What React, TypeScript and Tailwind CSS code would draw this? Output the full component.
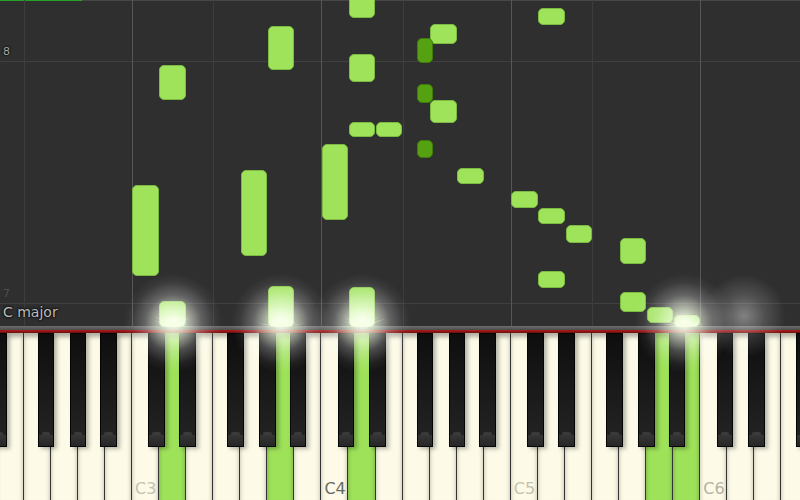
import React from 'react';

// keyboard geometry (one octave = 189.5px, C3 starts at x=132)
const W = 189.5 / 7;
const X0 = 132;
const xw = (i: number) => X0 + i * W;

// black key centre offset from the boundary to its right, by letter of the white key on its left
const BLACK_OFF: Record<number, number> = { 0: -2.7, 1: 1.7, 3: -4.7, 4: 0, 5: 3.6 };
const BK_W = 16.7;
const bx = (i: number) => xw(i + 1) + BLACK_OFF[((i % 7) + 7) % 7] - BK_W / 2;

const WHITE_FROM = -5; // E2
const WHITE_TO = 24; // F6
const LIT = [1, 5, 8, 19, 20];
const LABELS: Record<number, { text: string; cls: string }> = {
  0: { text: 'C3', cls: 'text-[#c4c2b0]' },
  7: { text: 'C4', cls: 'text-[#6a6a64]' },
  14: { text: 'C5', cls: 'text-[#c4c2b0]' },
  21: { text: 'C6', cls: 'text-[#b4b2a2]' },
};

type Note = { k: number; black?: boolean; top: number; bottom: number; active?: boolean };

const NOTES: Note[] = [
  { k: 8, top: -10, bottom: 18.3 },
  { k: 8, top: 54, bottom: 81.7 },
  { k: 8, top: 121.7, bottom: 137.3 },
  { k: 8, top: 287, bottom: 327, active: true },
  { k: 11, top: 24, bottom: 44 },
  { k: 11, top: 100, bottom: 122.7 },
  { k: 9, top: 121.7, bottom: 137.3 },
  { k: 7, top: 144, bottom: 220 },
  { k: 1, top: 65, bottom: 100 },
  { k: 1, top: 301, bottom: 327, active: true },
  { k: 5, top: 26, bottom: 70 },
  { k: 5, top: 286, bottom: 327, active: true },
  { k: 0, top: 185, bottom: 275.7 },
  { k: 4, top: 170, bottom: 256 },
  { k: 12, top: 168, bottom: 184 },
  { k: 14, top: 191, bottom: 207.7 },
  { k: 15, top: 8, bottom: 25 },
  { k: 15, top: 208.3, bottom: 224.3 },
  { k: 15, top: 270.7, bottom: 287.7 },
  { k: 16, top: 225, bottom: 242.7 },
  { k: 18, top: 238.3, bottom: 264.3 },
  { k: 18, top: 292.3, bottom: 311.7 },
  { k: 19, top: 306.7, bottom: 323.3 },
  { k: 20, top: 315, bottom: 327, active: true },
  { k: 3, black: true, top: 38.3, bottom: 63.3 },
  { k: 3, black: true, top: 84.3, bottom: 103.3 },
  { k: 3, black: true, top: 140, bottom: 158.3 },
];

// F#4 black key sits right of F4 (white index 10)
const noteBox = (n: Note) => {
  if (n.black) return { left: bx(10) + 0.5, width: 15.7 };
  return { left: xw(n.k) + 0.4, width: 26.4 };
};

const GLOWS = [
  { x: 172.5, y: 323, strong: true },
  { x: 281, y: 323, strong: true },
  { x: 362, y: 323, strong: true },
  { x: 684, y: 323, strong: true },
  { x: 744, y: 316, strong: false },
];

// spiky burst where a note meets the keys
const sparkPath = (seed: number) => {
  const pts: string[] = [];
  const n = 26;
  for (let j = 0; j <= n; j++) {
    const a = Math.PI + (Math.PI * j) / n;
    const r = j % 2 === 0 ? 8 + ((j * 7 + seed * 5) % 11) : 3.5;
    const sx = Math.cos(a) * r * 1.5;
    const sy = Math.sin(a) * r;
    pts.push(`${(26 + sx).toFixed(1)},${(20 + sy).toFixed(1)}`);
  }
  return `M0,20 L${pts.join(' L')} L52,20 Z`;
};

// columns between grid lines, starting at F2: F..B (4 keys), C..E (3 keys)
const COLS = [4, 3, 4, 3, 4, 3, 4, 3];

export default function App() {
  const whites: number[] = [];
  for (let i = WHITE_FROM; i <= WHITE_TO; i++) whites.push(i);
  const blacks: number[] = [];
  for (let i = WHITE_FROM - 1; i <= WHITE_TO; i++) {
    const n = ((i % 7) + 7) % 7;
    if (BLACK_OFF[n] !== undefined) blacks.push(i);
  }

  return (
    <div className="w-[800px] h-[500px] relative overflow-hidden bg-[#2f2f2f] flex flex-col font-['DejaVu_Sans',sans-serif]">
      {/* note roll */}
      <div className="h-[326px] relative shrink-0">
        {/* grid */}
        <div className="absolute inset-0 flex flex-col">
          <div className="h-px bg-[#474747] flex">
            <div className="w-[82px] bg-[#23a323]" />
          </div>
          <div className="h-[61px] border-b border-[#404040]" />
          <div className="h-[242px] border-b border-[#404040]" />
        </div>
        <div className="absolute inset-0 flex ml-[23.7px]">
          {COLS.map((c, idx) => (
            <div
              key={idx}
              className={`shrink-0 h-full border-l ${c === 4 ? 'border-[#3d3d3d] w-[108.286px]' : 'border-[#575757] w-[81.214px]'}`}
            />
          ))}
        </div>

        <span className="absolute left-[3px] top-[46px] text-[11px] leading-none text-[#a8a8a8] [text-shadow:0_0_2px_#000,0_0_2px_#000]">8</span>
        <span className="absolute left-[3px] top-[288px] text-[11px] leading-none text-[#4e4e4e]">7</span>

        {NOTES.map((n, idx) => {
          const b = noteBox(n);
          const cls = n.black
            ? 'bg-[#55a112] border-[#3f7d0b]'
            : n.active
              ? 'bg-gradient-to-b from-[#9fe35b] via-[#b4ec7e] to-[#eafcd8] border-[#86c64a]'
              : 'bg-[#9fe35b] border-[#7cbb42]';
          return (
            <div
              key={idx}
              className={`absolute border rounded-[5px] ${cls}`}
              style={{ left: b.left, width: b.width, top: n.top, height: n.bottom - n.top }}
            />
          );
        })}

        <span className="absolute left-[3px] top-[305px] text-[14px] leading-none text-[#bdbdbd] [text-shadow:0_0_3px_#000,0_0_2px_#000]">C major</span>
      </div>

      <div className="h-[4px] shrink-0 bg-gradient-to-b from-[#6e6e6e] to-[#4c4c4c]" />
      <div className="h-[3px] shrink-0 bg-gradient-to-b from-[#b01c1c] to-[#6e1010]" />

      {/* keyboard */}
      <div className="flex-1 relative">
        <div className="flex h-full ml-[-3.36px]">
          {whites.map(i => {
            const lit = LIT.includes(i);
            const label = LABELS[i];
            return (
              <div
                key={i}
                className={`w-[27.0714px] shrink-0 h-full border-r border-[#353535] flex flex-col justify-end pl-[3px] pb-[1px] shadow-[inset_0_4px_4px_rgba(0,0,0,0.3)] ${lit ? 'bg-[#9ee25a]' : 'bg-[#fdfbe7]'}`}
              >
                {label && <span className={`text-[16px] leading-[20px] ${label.cls}`}>{label.text}</span>}
              </div>
            );
          })}
        </div>

        {blacks.map(i => (
          <div
            key={`b${i}`}
            className="absolute top-0 h-[114px] border border-[#050505] bg-gradient-to-b from-[#0e0e0e] via-[#1a1a1a] to-[#242424] flex flex-col justify-end shadow-[3px_2px_4px_rgba(0,0,0,0.28)]"
            style={{ left: bx(i), width: BK_W }}
          >
            <div className="h-[3px] mx-[3px] bg-[#3a3a3a] rounded-t-[2px]" />
            <div className="h-[11px] bg-gradient-to-b from-[#363636] to-[#262626]" />
          </div>
        ))}
      </div>

      {/* glow over the hit line */}
      {GLOWS.map((g, idx) => (
        <div
          key={`g${idx}`}
          className={`absolute pointer-events-none rounded-full ${g.strong ? 'w-[100px] h-[100px] bg-[radial-gradient(circle,rgba(255,255,245,1)_0%,rgba(245,255,230,0.75)_16%,rgba(255,255,255,0.25)_40%,rgba(255,255,255,0.06)_58%,rgba(255,255,255,0)_70%)]' : 'w-[84px] h-[84px] bg-[radial-gradient(circle,rgba(255,255,255,0.4)_0%,rgba(255,255,255,0.16)_35%,rgba(255,255,255,0)_70%)]'}`}
          style={{ left: g.x - (g.strong ? 50 : 42), top: g.y - (g.strong ? 50 : 42) }}
        />
      ))}
      {GLOWS.filter(g => g.strong).map((g, idx) => (
        <svg
          key={`s${idx}`}
          className="absolute pointer-events-none"
          width="52"
          height="21"
          viewBox="0 0 52 21"
          style={{ left: g.x - 26, top: 307 }}
        >
          <path d={sparkPath(idx)} fill="rgba(245,255,228,0.9)" />
        </svg>
      ))}
    </div>
  );
}
